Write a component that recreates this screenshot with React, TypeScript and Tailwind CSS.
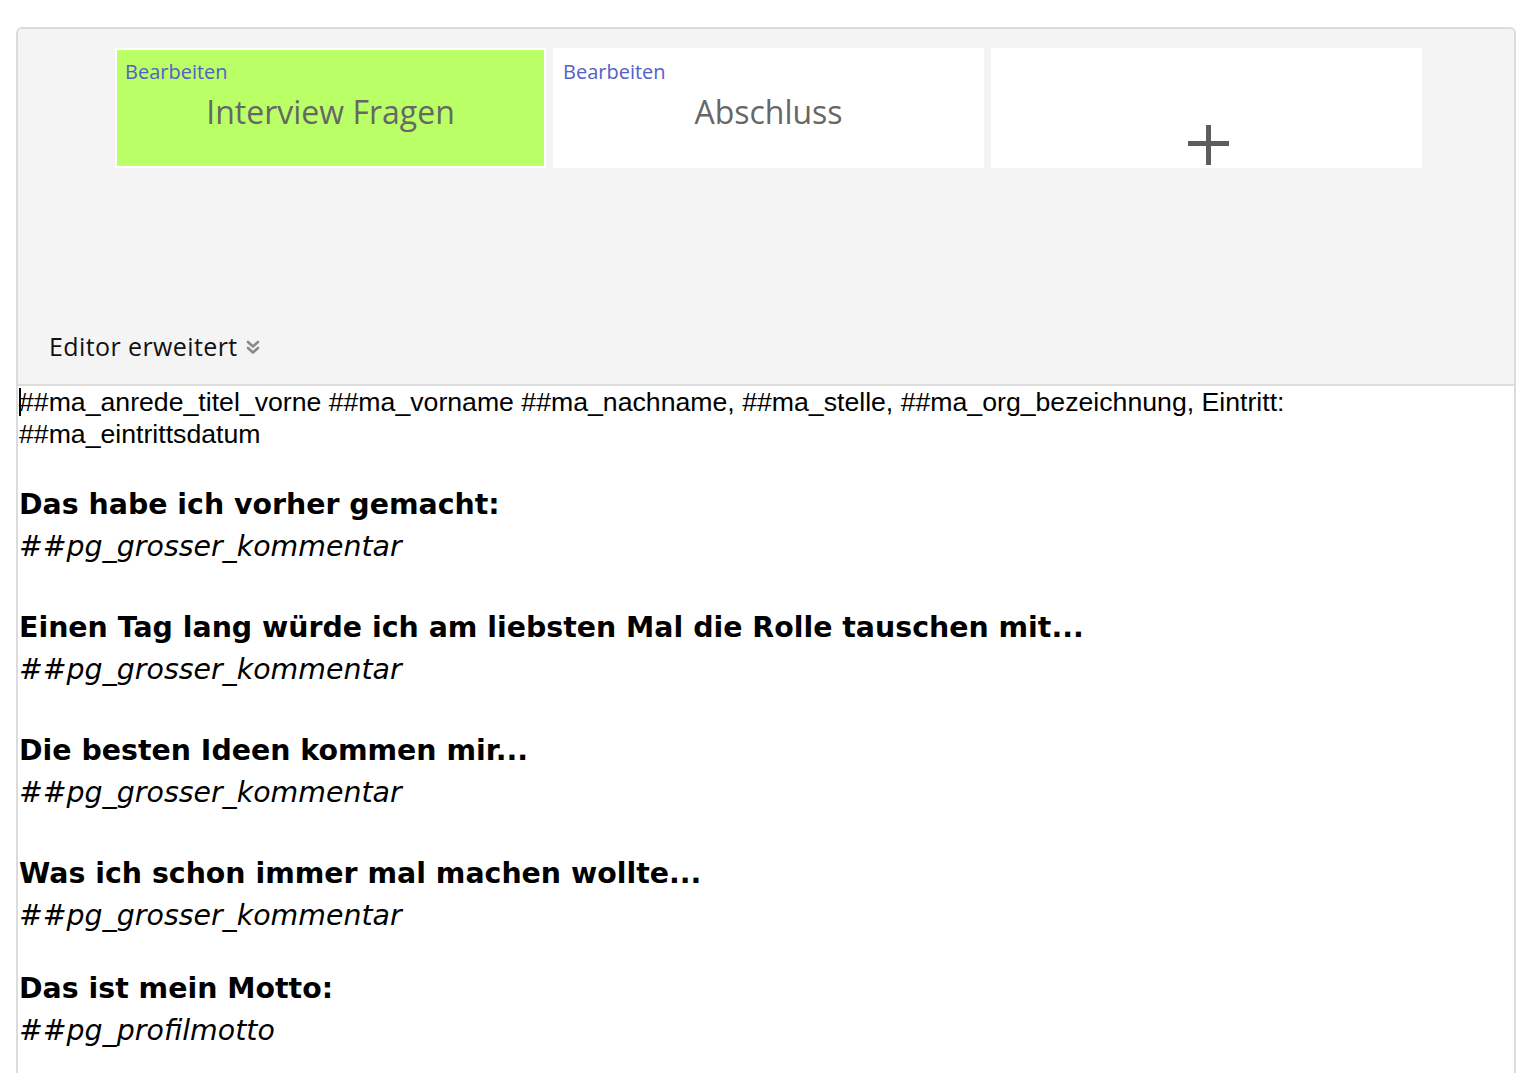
import {ReactNode} from 'react';

const blocks = [
  {q: 'Das habe ich vorher gemacht:', a: '##pg_grosser_kommentar'},
  {q: 'Einen Tag lang würde ich am liebsten Mal die Rolle tauschen mit...', a: '##pg_grosser_kommentar'},
  {q: 'Die besten Ideen kommen mir...', a: '##pg_grosser_kommentar'},
  {q: 'Was ich schon immer mal machen wollte...', a: '##pg_grosser_kommentar'},
  {q: 'Das ist mein Motto:', a: '##pg_profilmotto'},
];

function Card({active, children}: {active?: boolean; children: ReactNode}) {
  return (
    <div
      className={
        'flex h-[120px] w-[431px] flex-col border-2 border-white ' +
        (active ? 'bg-[#bbff66]' : 'bg-white')
      }
    >
      {children}
    </div>
  );
}

function TemplateCard({title, active}: {title: string; active?: boolean}) {
  return (
    <Card active={active}>
      <a className="mt-[8px] ml-[8px] text-[20px] leading-[27px] text-[#5460c8]">Bearbeiten</a>
      <div className="mt-[5px] text-center text-[32px] leading-[44px] text-[#676767]">{title}</div>
    </Card>
  );
}

function DoubleChevron() {
  return (
    <svg width="16" height="16" viewBox="0 0 16 16" fill="none" stroke="#8a8a8a" strokeWidth="2.6" strokeLinecap="round" strokeLinejoin="round">
      <polyline points="3,3 8,7.5 13,3" />
      <polyline points="3,9 8,13.5 13,9" />
    </svg>
  );
}

export default function App() {
  return (
    <div className="min-h-screen bg-white pt-[27px] pl-[16px] pr-[21px]">
      <div className="overflow-hidden rounded-t-[6px] border-2 border-b-0 border-[#dcdcdc]">
        <div className="flex h-[355px] flex-col bg-[#f4f4f4] font-['Open_Sans',sans-serif]">
          <div className="mt-[19px] flex gap-[7px] pl-[97px]">
            <TemplateCard title="Interview Fragen" active />
            <TemplateCard title="Abschluss" />
            <Card>
              <div className="flex flex-1 items-end justify-center pb-[1px] pl-[3px]">
                <svg width="41" height="40" viewBox="0 0 41 40" fill="#5d5d5d">
                  <rect x="18" y="0" width="5" height="40" />
                  <rect x="0" y="16" width="41" height="5" />
                </svg>
              </div>
            </Card>
          </div>
          <div className="mt-auto mb-[21px] flex items-center gap-[7px] pl-[31px]">
            <span className="text-[25px] leading-[33px] tracking-[0.4px] text-[#111]">Editor erweitert</span>
            <DoubleChevron />
          </div>
        </div>
        <div className="min-h-[720px] border-t-2 border-[#dcdcdc] bg-white pl-[1px] text-black">
          <p className="relative font-['Liberation_Sans',Arial,sans-serif] text-[26.67px] leading-[32px]">
            <span className="absolute left-0 top-[2px] h-[28px] w-[2px] bg-black" />
            ##ma_anrede_titel_vorne ##ma_vorname ##ma_nachname, ##ma_stelle, ##ma_org_bezeichnung, Eintritt: ##ma_eintrittsdatum
          </p>
          <div className="font-['DejaVu_Sans',Verdana,sans-serif] text-[28.4px] leading-[42px]">
            {blocks.map((b, i) => (
              <div key={i} className={i === 0 ? 'mt-[34px]' : i === 4 ? 'mt-[31px]' : 'mt-[39px]'}>
                <div className="font-bold">{b.q}</div>
                <div className="italic">{b.a}</div>
              </div>
            ))}
          </div>
        </div>
      </div>
    </div>
  );
}
